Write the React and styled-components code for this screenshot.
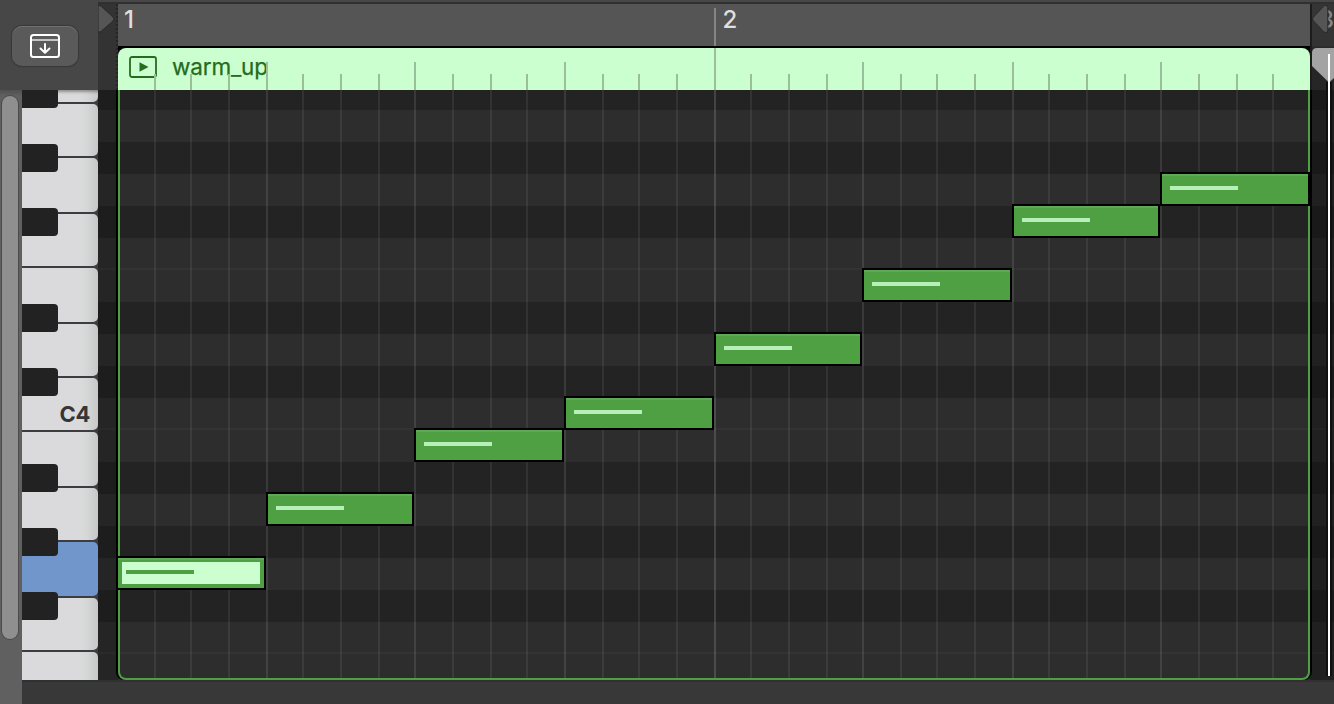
import React from "react";
import styled, { createGlobalStyle } from "styled-components";

const Global = createGlobalStyle`
  *, *::before, *::after { box-sizing: border-box; }
  body { margin: 0; background: #383838; overflow: hidden; font-family: Inter, "Liberation Sans", sans-serif; }
`;

const LINE_COUNT = 31;
const lineX = (i) => 2 * Math.floor(58.47 + 18.66 * i);
const steps = Array.from({ length: LINE_COUNT }, (_, k) => {
  const i = k + 1;
  const end = i === LINE_COUNT ? 1308 : lineX(i + 1);
  return { i, width: end - lineX(i), level: i % 16 === 0 ? "bar" : i % 4 === 0 ? "beat" : "step" };
});

const rows = [
  [20, "dark"], [32, "light"], [32, "dark"], [32, "light"], [32, "dark"], [32, "light", true],
  [32, "light"], [32, "dark"], [32, "light"], [32, "dark"], [32, "light", true], [32, "light"],
  [32, "dark"], [32, "light"], [32, "dark"], [32, "light"], [32, "dark"], [32, "light", true], [26, "light"],
].map(([height, tone, octave]) => ({ height, tone, octave }));

const whiteKeys = [
  { height: 14 }, { height: 54 }, { height: 56 }, { height: 54 }, { height: 56 }, { height: 54 },
  { height: 54, label: "C4" }, { height: 56 }, { height: 54 }, { height: 56, active: true },
  { height: 54 }, { height: 28 },
];
const blackKeys = [-10, 54, 118, 214, 278, 374, 438, 502];

const notes = [
  { x: 116, y: 556, w: 150, selected: true },
  { x: 266, y: 492, w: 148 },
  { x: 414, y: 428, w: 150 },
  { x: 564, y: 396, w: 150 },
  { x: 714, y: 332, w: 148 },
  { x: 862, y: 268, w: 150 },
  { x: 1012, y: 204, w: 148 },
  { x: 1160, y: 172, w: 150 },
];

const Window = styled.div`
  position: relative;
  width: 1334px;
  height: 704px;
  display: flex;
  flex-direction: column;
  overflow: hidden;
  background: #383838;
`;
const TopEdge = styled.div`
  flex: none;
  height: 4px;
  background: #474747;
  border-bottom: 2px solid #303030;
`;
const Header = styled.div`
  flex: none;
  height: 86px;
  display: flex;
`;
const Toolbar = styled.div`
  width: 98px;
  margin-top: -2px;
  padding: 24px 0 0 12px;
  background: #474747;
`;
const CatchButton = styled.button`
  display: flex;
  align-items: center;
  justify-content: center;
  width: 66px;
  height: 40px;
  padding: 0;
  border: 0;
  border-radius: 10px;
  background: #5a5a5a;
  box-shadow: 0 0 1px 1px rgba(0, 0, 0, 0.22), inset 0 1px 0 #707070;
`;
const Gutter = styled.div`
  width: 20px;
  background: #333;
  border-right: 2px dotted #242424;
`;
const StartMarker = styled.svg`
  display: block;
`;
const Timeline = styled.div`
  width: 1192px;
  display: flex;
  flex-direction: column;
`;
const Ruler = styled.div`
  height: 44px;
  display: grid;
  grid-template-columns: 596px 596px;
  background: #555;
  border-bottom: 2px solid #000;
`;
const Bar = styled.div`
  display: flex;
  align-items: flex-start;
  padding: 1px 0 0 ${(p) => (p.$line ? 8.5 : 6)}px;
  background: ${(p) => (p.$line ? "linear-gradient(#858585, #858585) 0 4px / 2px 100% no-repeat" : "none")};
  font-size: 24px;
  font-weight: 500;
  line-height: 30px;
  color: #dfdfdf;
`;
const RegionCap = styled.div`
  height: 42px;
  background: #000;
`;
const RegionHeader = styled.div`
  position: relative;
  display: flex;
  align-items: center;
  height: 42px;
  padding: 0 0 4px 11px;
  gap: 15px;
  border-radius: 8px 8px 0 0;
  overflow: hidden;
  background: #ccffcf;
  color: #256c1d;
`;
const RegionName = styled.span`
  font-size: 22.5px;
  line-height: 30px;
  letter-spacing: -0.15px;
  -webkit-text-stroke: 0.25px #256c1d;
`;
const TickLayer = styled.div`
  position: absolute;
  inset: 0;
  display: flex;
  align-items: flex-end;
  padding-left: 36px;
`;
const tickHeights = { bar: "42px", beat: "28px", step: "16px" };
const Tick = styled.div`
  flex: none;
  width: ${(p) => p.$width}px;
  height: ${(p) => tickHeights[p.$level]};
  border-left: 2px solid #99bf9b;
`;
const EndZone = styled.div`
  flex: 1;
  padding: 1px 0 0 7px;
  background: linear-gradient(#353535, #333 42px, #262626 44px);
  border-left: 2px solid #1c1c1c;
`;
const NextBar = styled.span`
  display: block;
  font-size: 24px;
  font-weight: 500;
  line-height: 30px;
  letter-spacing: -2px;
  color: #858585;
`;
const Body = styled.div`
  flex: none;
  height: 590px;
  display: flex;
`;
const ScrollTrack = styled.div`
  width: 22px;
  height: 614px;
  padding: 6px 0 0 2px;
  background: linear-gradient(#505050, #606060 6px);
`;
const ScrollThumb = styled.div`
  width: 16px;
  height: 543px;
  border-radius: 8px;
  background: #8f8f8f;
  box-shadow: 0 0 0 1px #4b4b4b;
`;
const Keyboard = styled.div`
  position: relative;
  width: 76px;
  overflow: hidden;
  background: #3d3d40;
`;
const WhiteKey = styled.div`
  display: flex;
  align-items: center;
  justify-content: flex-end;
  width: 76px;
  height: ${(p) => p.$height - (p.$last ? 0 : 2)}px;
  margin-bottom: ${(p) => (p.$last ? 0 : 2)}px;
  padding: ${(p) => (p.$labelled ? "19px 8px 0 0" : "0")};
  border-radius: 0 ${(p) => (p.$first ? 0 : 5)}px ${(p) => (p.$last ? 0 : 5)}px 0;
  background: ${(p) => (p.$active ? "#7196cb" : "linear-gradient(90deg, #dadadc 78%, #d5d6d6 86%, #c6c7c7)")};
  box-shadow: ${(p) => (p.$first ? "inset 0 4px 3px -2px rgba(0, 0, 0, 0.35)" : "none")};
  font-size: 22px;
  font-weight: 700;
  line-height: 28px;
  letter-spacing: -0.3px;
  color: #353537;
`;
const BlackKey = styled.div`
  position: absolute;
  left: 0;
  top: ${(p) => p.$top}px;
  width: 36px;
  height: 28px;
  border-radius: 0 4px 4px 0;
  background: #222;
`;
const Editor = styled.div`
  position: relative;
  flex: 1;
  display: flex;
  flex-direction: column;
`;
const Row = styled.div`
  height: ${(p) => p.$height}px;
  background: ${(p) => (p.$tone === "dark" ? "#232323" : "#2d2d2d")};
  border-bottom: ${(p) => (p.$octave ? "2px solid #333" : "0")};
`;
const Shade = styled.div`
  position: absolute;
  top: 0;
  bottom: 0;
  ${(p) => (p.$side === "left" ? "left: 0; width: 20px;" : "right: 0; width: 24px;")}
  background: rgba(0, 0, 0, ${(p) => (p.$side === "left" ? 0.16 : 0.28)});
`;
const RegionFrame = styled.div`
  position: absolute;
  top: 0;
  left: 20px;
  width: 1192px;
  height: 590px;
  display: flex;
  padding-left: 34px;
  border: solid #4ea043;
  border-width: 0 2px 2px;
  border-radius: 0 0 8px 8px;
  box-shadow: -2px 0 0 #000, 2px 0 0 #000;
`;
const lineColors = { bar: "rgba(255,255,255,.15)", beat: "rgba(255,255,255,.1)", step: "rgba(255,255,255,.07)" };
const GridCell = styled.div`
  flex: none;
  width: ${(p) => p.$width}px;
  border-left: 2px solid ${(p) => lineColors[p.$level]};
`;
const Note = styled.div`
  position: absolute;
  left: ${(p) => p.$x - 98}px;
  top: ${(p) => p.$y - 90}px;
  width: ${(p) => p.$w}px;
  height: 34px;
  padding: ${(p) => (p.$selected ? "4px" : "0")};
  border: 2px solid #000;
  background: linear-gradient(#5ea955 2px, #4ea043 2px);
`;
const NoteFace = styled.div`
  height: ${(p) => (p.$selected ? 22 : 30)}px;
  padding: ${(p) => (p.$selected ? "8px 0 0 4px" : "12px 0 0 8px")};
  background: ${(p) => (p.$selected ? "#ccffcf" : "transparent")};
`;
const Velocity = styled.div`
  width: 68px;
  height: 4px;
  background: ${(p) => (p.$selected ? "#4ea043" : "#b6efb8")};
`;
const Footer = styled.div`
  flex: 1;
  margin-left: 22px;
  background: #383838;
  border-top: 2px solid #303030;
`;
const EndOverlay = styled.svg`
  position: absolute;
  left: 1308px;
  top: 0;
  pointer-events: none;
`;

export default function App() {
  return (
    <Window>
      <Global />
      <TopEdge />
      <Header>
        <Toolbar>
          <CatchButton aria-label="Catch playhead">
            <svg width="32" height="26" viewBox="0 0 32 26" fill="none" stroke="#fff" strokeWidth="2">
              <rect x="2" y="2" width="28" height="22" rx="2.5" />
              <path d="M2 7H30" strokeWidth="1.3" />
              <path d="M16 11V19.500M11.500 15.500l4.500 4.200L20.500 15.500" strokeLinecap="round" strokeLinejoin="round" />
            </svg>
          </CatchButton>
        </Toolbar>
        <Gutter>
          <StartMarker width="18" height="32" viewBox="0 0 18 32">
            <path d="M0 1.500h1q1.500 0 2.500 1l11.500 10.500q2 2 0 4L3.500 27q-1 1-2.500 1H0z" fill="#555" stroke="#292929" strokeWidth="1" />
          </StartMarker>
        </Gutter>
        <Timeline>
          <Ruler>
            <Bar>1</Bar>
            <Bar $line>2</Bar>
          </Ruler>
          <RegionCap>
            <RegionHeader>
              <svg width="28" height="22" viewBox="0 0 28 22" fill="none">
                <rect x="1" y="1" width="26" height="20" rx="2" stroke="#256c1d" strokeWidth="1.8" />
                <path d="M10.500 6.300L19.500 11L10.500 15.700z" fill="#256c1d" />
              </svg>
              <RegionName>warm_up</RegionName>
              <TickLayer>
                {steps.map((s) => <Tick key={s.i} $width={s.width} $level={s.level} />)}
              </TickLayer>
            </RegionHeader>
          </RegionCap>
        </Timeline>
        <EndZone>
          <NextBar>3</NextBar>
        </EndZone>
      </Header>
      <Body>
        <ScrollTrack><ScrollThumb /></ScrollTrack>
        <Keyboard>
          {whiteKeys.map((k, i) => (
            <WhiteKey key={i} $height={k.height} $active={k.active} $labelled={!!k.label} $first={i === 0} $last={i === whiteKeys.length - 1}>
              {k.label}
            </WhiteKey>
          ))}
          {blackKeys.map((top) => <BlackKey key={top} $top={top} />)}
        </Keyboard>
        <Editor>
          {rows.map((r, i) => <Row key={i} $height={r.height} $tone={r.tone} $octave={r.octave} />)}
          <Shade $side="left" />
          <Shade $side="right" />
          <RegionFrame>
            {steps.map((s) => <GridCell key={s.i} $width={s.width} $level={s.level} />)}
          </RegionFrame>
          {notes.map((n) => (
            <Note key={n.x} $x={n.x} $y={n.y} $w={n.w} $selected={n.selected}>
              <NoteFace $selected={n.selected}><Velocity $selected={n.selected} /></NoteFace>
            </Note>
          ))}
        </Editor>
      </Body>
      <Footer />
      <EndOverlay width="26" height="680" viewBox="0 0 26 680">
        <path d="M17 5.500h1q1.800 0 1.800 2v23q0 2-1.800 2-1.500 0-2.500-1L5.500 21q-2-2 0-4L15.500 6.500q.8-1 1.500-1z" fill="#555" stroke="#292929" />
        <path d="M4 53q0-5 5-5h17v30l-5 4.500L4 66z" fill="#a5a4a5" />
        <path d="M18 82h6v594h-6z" fill="#101010" />
        <path d="M20 54h2v622h-2z" fill="#fff" />
      </EndOverlay>
    </Window>
  );
}
